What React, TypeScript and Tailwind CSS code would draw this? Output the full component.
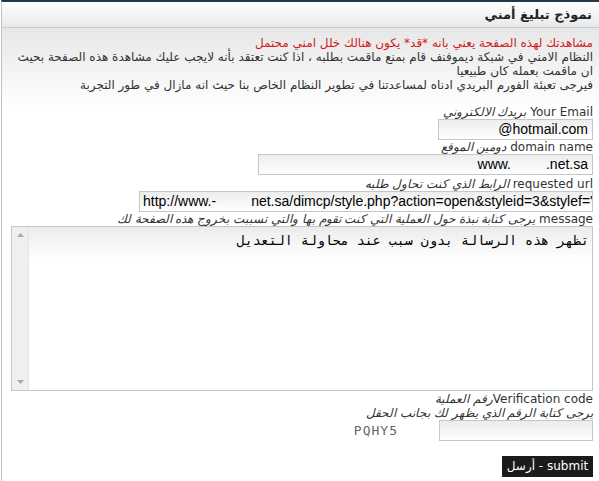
import React from 'react';

const labelFont = { fontFamily: "Tahoma, 'DejaVu Sans', sans-serif" };

const App: React.FC = () => {
  return (
    <div className="w-[599px] h-[481px] bg-white overflow-hidden" dir="rtl">
      <div className="ml-px h-full border-l border-[#b9c5cf] border-t-2 border-t-[#23384a] flex flex-col" style={labelFont}>
        {/* header */}
        <div className="h-[26px] shrink-0 flex items-center px-[7px] bg-gradient-to-b from-white to-[#e9e9e9] border-b border-[#c3ccd4]">
          <h1 className="text-[13px] font-bold text-[#222]">نموذج تبليغ أمني</h1>
        </div>

        {/* body */}
        <div className="flex-1 pr-[6px] pl-[4px] pt-[8px] bg-gradient-to-b from-[#e7e7e7] via-white via-[18%] to-white text-[12px] leading-[14px] text-[#333]">
          <p className="text-[#d11b1b]">مشاهدتك لهذه الصفحة يعني بانه *قد* يكون هنالك خلل امني محتمل</p>
          <p>النظام الامني في شبكة ديموفنف قام بمنع ماقمت بطلبه ، اذا كنت تعتقد بأنه لايجب عليك مشاهدة هذه الصفحة بحيث</p>
          <p>ان ماقمت بعمله كان طبيعيا</p>
          <p>فيرجى تعبئة الفورم البريدي ادناه لمساعدتنا في تطوير النظام الخاص بنا حيث انه مازال في طور التجربة</p>

          <form className="mt-[13px] flex flex-col items-start">
            <label>
              Your Email <i>بريدك الالكتروني</i>
            </label>
            <Field width="w-[155px]" value="@hotmail.com" />

            <label>
              domain name <i>دومين الموقع</i>
            </label>
            <Field width="w-[335px]" value="www.         .net.sa" />

            <label className="mt-[2px]">
              requested url <i>الرابط الذي كنت تحاول طلبه</i>
            </label>
            <div className="w-[454px] h-[21px] border border-[#bfc7cf] bg-gradient-to-b from-[#ededed] to-white overflow-hidden" dir="ltr">
              <span className="block whitespace-pre px-[3px] text-[14px] leading-[19px] text-black" style={{ fontFamily: "'Liberation Sans', Arial, sans-serif" }}>
                {"http://www.-         net.sa/dimcp/style.php?action=open&styleid=3&stylef='"}
              </span>
            </div>

            <label>
              message <i>يرجى كتابة نبذة حول العملية التي كنت تقوم بها والتي تسببت بخروج هذه الصفحة لك</i>
            </label>
            <div className="w-[582px] h-[165px] border border-[#bfc7cf] flex bg-white">
              <div className="flex-1 bg-gradient-to-b from-[#ececec] via-white via-[20%] to-white pr-[3px] pt-[6px]">
                <p className="text-[13.3px] leading-[16px] text-black" style={{ fontFamily: "'DejaVu Sans Mono', 'Courier New', monospace" }}>
                  تظهر هذه الرسالة بدون سبب عند محاولة التعديل
                </p>
              </div>
              <div className="w-[17px] bg-[#efefef] border-r border-[#e4e4e4] flex flex-col items-center justify-between py-[6px]">
                <svg width="7" height="4" viewBox="0 0 7 4"><path d="M0 4 L3.5 0 L7 4 Z" fill="#a8a8a8" /></svg>
                <svg width="7" height="4" viewBox="0 0 7 4"><path d="M0 0 L3.5 4 L7 0 Z" fill="#a8a8a8" /></svg>
              </div>
            </div>

            <label className="mt-px">
              Verification code<i>رقم العملية</i>
            </label>
            <label>
              <i>يرجى كتابة الرقم الذي يظهر لك بجانب الحقل</i>
            </label>
            <div className="flex items-center gap-[41px]">
              <div className="w-[154px] h-[21px] border border-[#bfc7cf] bg-gradient-to-b from-[#ececec] to-white" />
              <span className="text-[13px] text-[#666] tracking-[1px]" style={{ fontFamily: "'DejaVu Sans Mono', monospace" }}>
                PQHY5
              </span>
            </div>

            <button type="button" className="mt-[15px] w-[91px] h-[21px] bg-[#1b1b1b] text-white text-[12px] leading-[21px]">
              submit - أرسل
            </button>
          </form>
        </div>
      </div>
    </div>
  );
};

const Field: React.FC<{ width: string; value: string }> = ({ width, value }) => (
  <div className={`${width} h-[21px] border border-[#bfc7cf] bg-gradient-to-b from-[#ededed] to-white overflow-hidden`}>
    <span dir="ltr" className="block text-right whitespace-pre px-[4px] text-[14px] leading-[19px] text-black" style={{ fontFamily: "'Liberation Sans', Arial, sans-serif" }}>
      {value}
    </span>
  </div>
);

export default App;
